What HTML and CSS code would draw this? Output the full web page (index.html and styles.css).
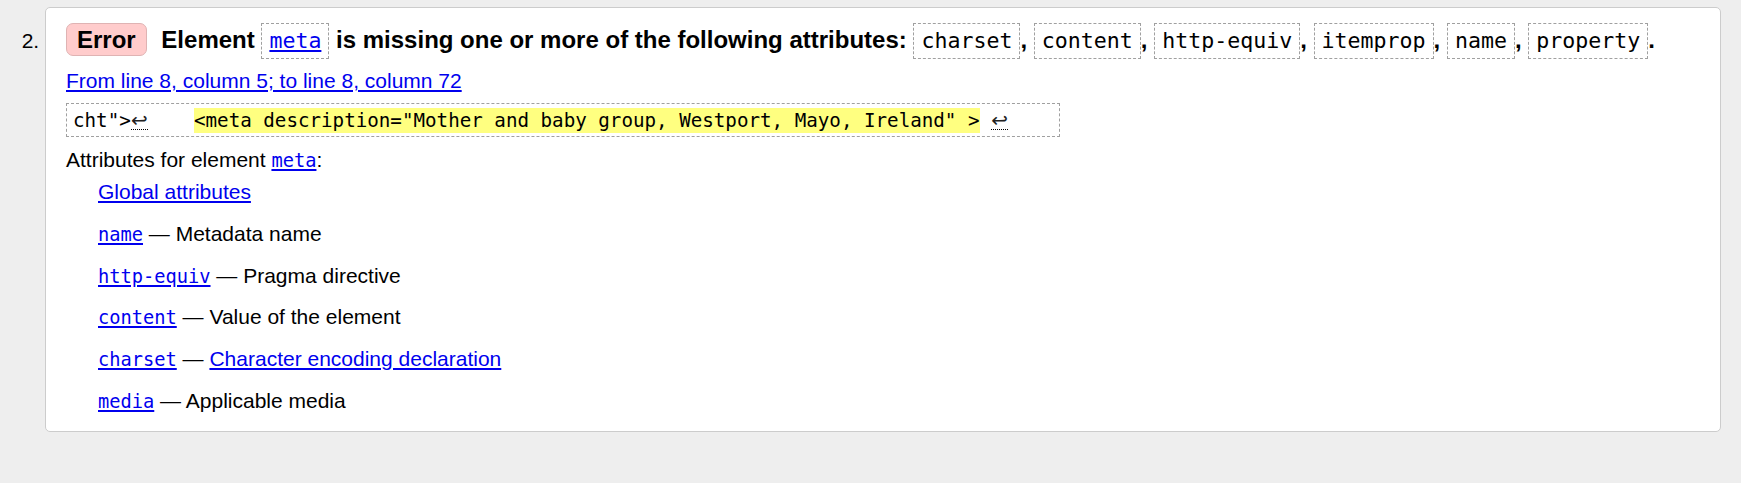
FILE: index.html
```html
<!DOCTYPE html>
<html lang="en">
<head>
<meta charset="utf-8">
<title>Validation result</title>
<link rel="stylesheet" href="styles.css">
</head>
<body>
<ol class="results" start="2">
  <li class="error">
    <p class="msg"><strong class="badge">Error</strong> Element <code class="box"><a href="#">meta</a></code> is missing one or more of the following attributes: <code class="box">charset</code>, <code class="box">content</code>, <code class="box">http-equiv</code>, <code class="box">itemprop</code>, <code class="box">name</code>, <code class="box">property</code>.</p>
    <p class="location"><a href="#">From line 8, column 5; to line 8, column 72</a></p>
    <p class="extract"><code>cht"&gt;<span class="lf" title="Line break">↩</span>    <b>&lt;meta description="Mother and baby group, Westport, Mayo, Ireland" &gt;</b> <span class="lf" title="Line break">↩</span></code></p>
    <dl class="attrs">
      <dt>Attributes for element <a href="#"><code>meta</code></a>:</dt>
      <dd><a href="#">Global attributes</a></dd>
      <dd><a href="#"><code>name</code></a> — Metadata name</dd>
      <dd><a href="#"><code>http-equiv</code></a> — Pragma directive</dd>
      <dd><a href="#"><code>content</code></a> — Value of the element</dd>
      <dd><a href="#"><code>charset</code></a> — <a href="#">Character encoding declaration</a></dd>
      <dd><a href="#"><code>media</code></a> — Applicable media</dd>
    </dl>
  </li>
</ol>
</body>
</html>
```
FILE: styles.css
```css
html, body {
  margin: 0;
  padding: 0;
  background: #eeeeee;
}

body {
  font-family: "Liberation Sans", Arial, sans-serif;
  font-size: 21px;
  color: #000;
  height: 483px;
}

a {
  color: #0000ee;
  text-decoration: underline;
}

.results {
  margin: 7px 20px 0 0;
  padding: 0 0 0 45px;
}

.results li::marker {
  font-family: "Liberation Sans", Arial, sans-serif;
  font-size: 21px;
  font-weight: normal;
  color: #000;
}

.error {
  background: #fff;
  border: 1px solid #cccccc;
  border-radius: 5px;
  padding: 15px 20px 18px 20px;
}

.msg {
  margin: 0;
  font-size: 24px;
  font-weight: bold;
  line-height: normal;
}

.badge {
  display: inline-block;
  line-height: 31px;
  padding: 0 10px;
  margin-right: 8px;
  background: #ffcccc;
  border: 1px solid #dfb3b3;
  border-radius: 7px;
}

.box {
  display: inline-block;
  font-family: "DejaVu Sans Mono", "Liberation Mono", monospace;
  font-size: 21.6px;
  font-weight: normal;
  line-height: 34px;
  padding: 0 7px;
  border: 1px dashed #a0a0a0;
}

.location {
  margin: 10px 0 0 0;
  line-height: 24px;
}

.extract {
  margin: 10px 0 0 0;
  width: 994px;
  box-sizing: border-box;
  border: 1px dashed #a0a0a0;
  padding: 4px 6px;
}

.extract code {
  font-family: "DejaVu Sans Mono", "Liberation Mono", monospace;
  font-size: 19.2px;
  line-height: 22px;
  white-space: pre;
}

.extract b {
  font-weight: normal;
  background: #ffff80;
  padding: 1px 0;
}

.lf {
  display: inline-block;
  width: 17px;
  text-align: center;
  font-family: "DejaVu Sans", sans-serif;
  font-size: 20px;
  color: #222;
  line-height: 18px;
  border-bottom: 1px dotted #000;
}

.attrs {
  margin: 10.5px 0 0 0;
  line-height: 24px;
}

.attrs dt {
  margin: 0;
}

.attrs dd {
  margin: 17.75px 0 0 32px;
}

.attrs dt + dd {
  margin-top: 8.5px;
}

.attrs code {
  font-family: "DejaVu Sans Mono", "Liberation Mono", monospace;
  font-size: 18.7px;
  line-height: 18px;
}
```
